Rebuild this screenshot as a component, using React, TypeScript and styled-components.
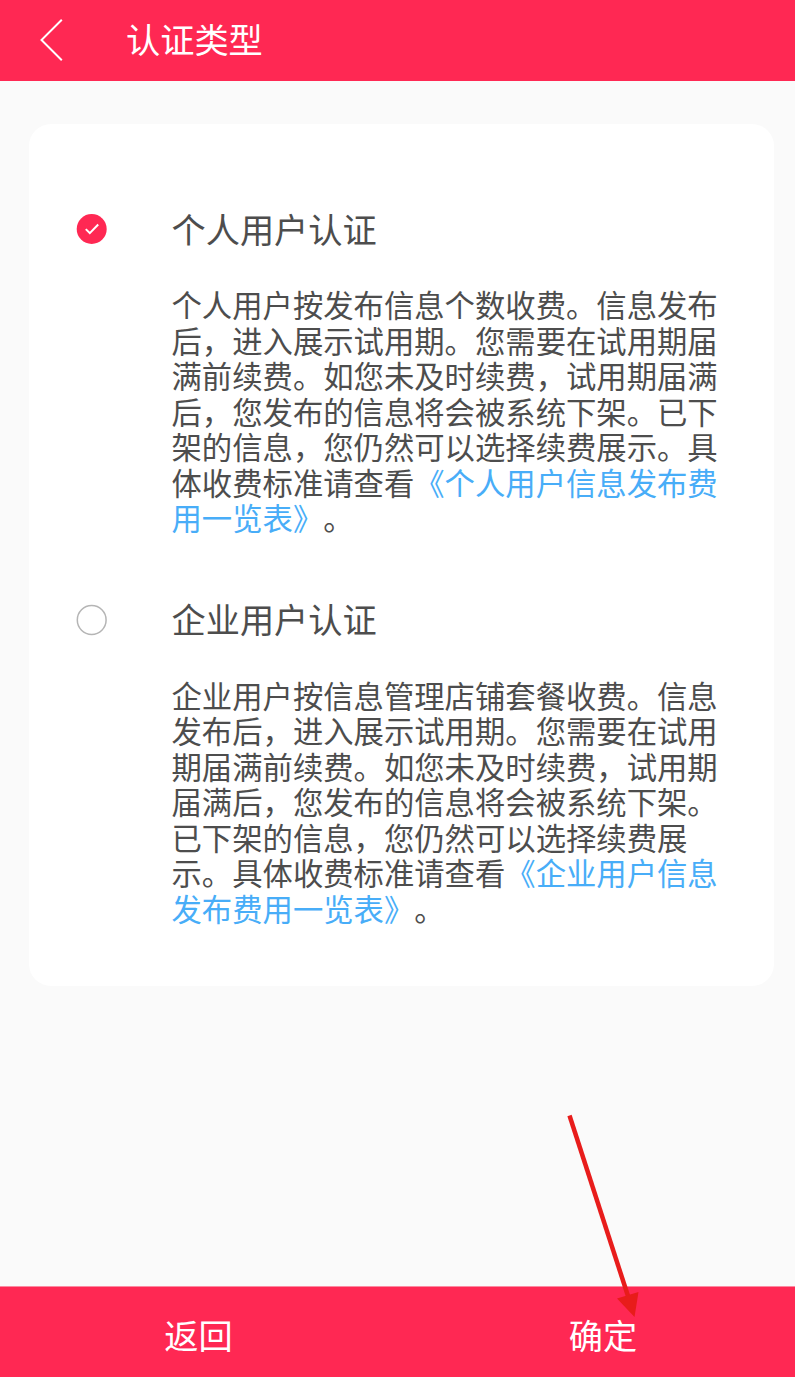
import React, { useState } from "react";
import styled, { createGlobalStyle } from "styled-components";

const GlobalStyle = createGlobalStyle`
  * { box-sizing: border-box; }
  body {
    margin: 0;
    background: #fafafa;
    font-family: "Noto Sans CJK SC", sans-serif;
    color: #4d4d4d;
    text-spacing-trim: space-all;
  }
`;

const Screen = styled.div`
  position: relative;
  display: flex;
  flex-direction: column;
  width: 795px;
  height: 1377px;
  background: #fafafa;
  overflow: hidden;
`;

const Header = styled.header`
  display: flex;
  align-items: flex-start;
  flex: none;
  height: 81px;
  padding: 12px 0 0 38px;
  background: #ff2853;
  color: #fff;
`;

const BackIcon = styled.svg`
  width: 26px;
  height: 44px;
  margin: 6px 62px 0 0;
`;

const Title = styled.h1`
  margin: 1px 0 0;
  font-size: 34.2px;
  font-weight: 400;
  line-height: 50px;
`;

const Content = styled.main`
  flex: 1;
  padding: 43px 21.5px 0 28.5px;
`;

const Card = styled.section`
  height: 862px;
  padding: 82px 50px 0 47.5px;
  border-radius: 22px;
  background: #fff;
`;

const Option = styled.div`
  display: flex;
  height: 390.4px;
  cursor: pointer;
`;

const Radio = styled.svg`
  flex: none;
  width: 32px;
  height: 32px;
  margin: 7.2px 63.5px 0 0;
`;

const OptionTitle = styled.h2`
  margin: -3px 0 34.35px;
  font-size: 34.2px;
  font-weight: 400;
  line-height: 50px;
`;

const Description = styled.p`
  width: 560px;
  margin: 0;
  font-size: 30.35px;
  line-height: 35.47px;
  white-space: nowrap;
`;

const Link = styled.span`
  color: #48adf8;
`;

const Footer = styled.footer`
  display: flex;
  flex: none;
  height: 91px;
  border-top: 1px solid #fb8aa1;
  background: #ff2853;
`;

const Action = styled.button<{ $width: number }>`
  flex: 0 0 ${(p) => p.$width}px;
  padding: 4px 0 0;
  border: 0;
  background: none;
  color: #fff;
  font-family: inherit;
  font-size: 34.2px;
  line-height: 50px;
`;

const Arrow = styled.svg`
  position: absolute;
  left: 560px;
  top: 1105px;
  width: 90px;
  height: 220px;
  pointer-events: none;
`;

type Line = { text: string; link?: string; tail?: string };

const options: { title: string; lines: Line[] }[] = [
  {
    title: "个人用户认证",
    lines: [
      { text: "个人用户按发布信息个数收费。信息发布" },
      { text: "后，进入展示试用期。您需要在试用期届" },
      { text: "满前续费。如您未及时续费，试用期届满" },
      { text: "后，您发布的信息将会被系统下架。已下" },
      { text: "架的信息，您仍然可以选择续费展示。具" },
      { text: "体收费标准请查看", link: "《个人用户信息发布费" },
      { text: "", link: "用一览表》", tail: "。" },
    ],
  },
  {
    title: "企业用户认证",
    lines: [
      { text: "企业用户按信息管理店铺套餐收费。信息" },
      { text: "发布后，进入展示试用期。您需要在试用" },
      { text: "期届满前续费。如您未及时续费，试用期" },
      { text: "届满后，您发布的信息将会被系统下架。" },
      { text: "已下架的信息，您仍然可以选择续费展" },
      { text: "示。具体收费标准请查看", link: "《企业用户信息" },
      { text: "", link: "发布费用一览表》", tail: "。" },
    ],
  },
];

export default function App() {
  const [selected, setSelected] = useState(0);
  return (
    <Screen>
      <GlobalStyle />
      <Header>
        <BackIcon viewBox="0 0 26 44" fill="none" stroke="#fff" strokeWidth="2">
          <path d="M23.8 1.8 3.5 22l20.3 20.2" />
        </BackIcon>
        <Title>认证类型</Title>
      </Header>
      <Content>
        <Card>
          {options.map((o, i) => (
            <Option key={o.title} onClick={() => setSelected(i)}>
              <Radio viewBox="0 0 32 32" fill="none">
                {selected === i ? (
                  <>
                    <circle cx="15.7" cy="16" r="15" fill="#ff2853" />
                    <path d="m9.8 16.1 4 4 8.4-8.6" stroke="#fff" strokeWidth="2" />
                  </>
                ) : (
                  <circle cx="15.7" cy="16" r="14.4" stroke="#b5b5b5" strokeWidth="1.5" />
                )}
              </Radio>
              <div>
                <OptionTitle>{o.title}</OptionTitle>
                <Description>
                  {o.lines.map((l, n) => (
                    <React.Fragment key={n}>
                      {n > 0 && <br />}
                      {l.text}
                      {l.link && <Link>{l.link}</Link>}
                      {l.tail}
                    </React.Fragment>
                  ))}
                </Description>
              </div>
            </Option>
          ))}
        </Card>
      </Content>
      <Footer>
        <Action $width={397}>返回</Action>
        <Action $width={412}>确定</Action>
      </Footer>
      <Arrow viewBox="0 0 90 220">
        <path d="M9.5 10.5 68 191" stroke="#e81c1b" strokeWidth="4.5" />
        <path d="m57 193.5 21.5-6.500-4 25z" fill="#e81c1b" />
      </Arrow>
    </Screen>
  );
}
